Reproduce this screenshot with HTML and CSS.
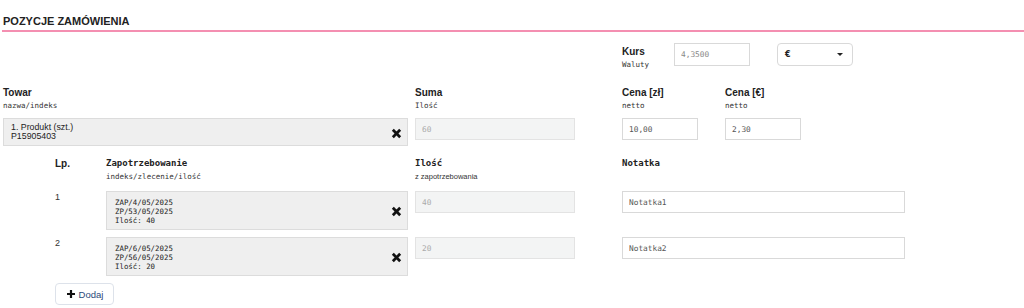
FILE: index.html
```html
<!DOCTYPE html>
<html lang="pl">

<head>
    <meta charset="UTF-8">
    <meta name="viewport" content="width=device-width, initial-scale=1.0">
    <title>Pozycje zamówienia</title>
    <link rel="stylesheet" href="styles.css">
</head>

<body>
    <section class="positions">
        <h2 class="section-title">POZYCJE ZAMÓWIENIA</h2>

        <div class="rate-row">
            <div class="label">
                <span class="label-main">Kurs</span>
                <span class="label-sub mono">Waluty</span>
            </div>
            <input class="field field-sm" type="text" value="4,3500">
            <div class="select">
                <span>€</span>
                <span class="caret"></span>
            </div>
        </div>

        <div class="product-grid">
            <div class="label">
                <span class="label-main">Towar</span>
                <span class="label-sub mono">nazwa/indeks</span>
            </div>
            <div class="label">
                <span class="label-main">Suma</span>
                <span class="label-sub mono">Ilość</span>
            </div>
            <div class="label">
                <span class="label-main">Cena [zł]</span>
                <span class="label-sub mono">netto</span>
            </div>
            <div class="label">
                <span class="label-main">Cena [€]</span>
                <span class="label-sub mono">netto</span>
            </div>

            <div class="picked picked-product">
                <div class="picked-text">
                    1. Produkt (szt.)<br>P15905403
                </div>
                <svg class="remove" viewBox="0 0 12 12">
                    <path d="M2 2L10 10M10 2L2 10" stroke="#111" stroke-width="3" />
                </svg>
            </div>
            <div class="cell"><input class="field field-md" type="text" value="60" disabled></div>
            <div class="cell"><input class="field field-sm" type="text" value="10,00"></div>
            <div class="cell"><input class="field field-sm" type="text" value="2,30"></div>
        </div>

        <div class="needs">
            <div class="needs-grid">
                <div class="label">
                    <span class="label-main">Lp.</span>
                </div>
                <div class="label">
                    <span class="label-main mono">Zapotrzebowanie</span>
                    <span class="label-sub mono">indeks/zlecenie/ilość</span>
                </div>
                <div class="label">
                    <span class="label-main mono">Ilość</span>
                    <span class="label-sub">z zapotrzebowania</span>
                </div>
                <div class="label">
                    <span class="label-main mono">Notatka</span>
                </div>

                <div class="lp">1</div>
                <div class="picked picked-need mono">
                    <div class="picked-text">ZAP/4/05/2025<br>ZP/53/05/2025<br>Ilość: 40</div>
                    <svg class="remove" viewBox="0 0 12 12">
                        <path d="M2 2L10 10M10 2L2 10" stroke="#111" stroke-width="3" />
                    </svg>
                </div>
                <div class="cell"><input class="field field-md" type="text" value="40" disabled></div>
                <div class="cell"><input class="field field-lg" type="text" value="Notatka1"></div>

                <div class="lp">2</div>
                <div class="picked picked-need mono">
                    <div class="picked-text">ZAP/6/05/2025<br>ZP/56/05/2025<br>Ilość: 20</div>
                    <svg class="remove" viewBox="0 0 12 12">
                        <path d="M2 2L10 10M10 2L2 10" stroke="#111" stroke-width="3" />
                    </svg>
                </div>
                <div class="cell"><input class="field field-md" type="text" value="20" disabled></div>
                <div class="cell"><input class="field field-lg" type="text" value="Notatka2"></div>
            </div>

            <button class="btn-add" type="button">
                <svg width="10" height="10" viewBox="0 0 10 10">
                    <path d="M5 1V9M1 5H9" stroke="#111" stroke-width="2.2" />
                </svg>
                Dodaj
            </button>
        </div>
    </section>
</body>

</html>
```

FILE: styles.css
```css
:root {
    --pink: #f48fb1;
    --border: #d9d9d9;
    --text: #222;
    --muted: #888;
    --disabled-bg: #f3f4f4;
    --picked-bg: #efefef;
}

* {
    margin: 0;
    padding: 0;
    box-sizing: border-box;
}

body {
    background: #fff;
    color: var(--text);
    font-family: "Liberation Sans Narrow", "Liberation Sans", Arial, sans-serif;
    font-size: 10px;
}

.mono {
    font-family: "DejaVu Sans Mono", "Liberation Mono", monospace;
}

.positions {
    padding: 0 0 0 3px;
}

.section-title {
    font-size: 11px;
    font-weight: 700;
    line-height: 14px;
    padding-top: 14px;
    padding-bottom: 2px;
    margin-left: -1px;
    padding-left: 1px;
    border-bottom: 2px solid var(--pink);
}

.label {
    display: flex;
    flex-direction: column;
}

.label-main {
    font-size: 10px;
    font-weight: 700;
    line-height: 13px;
    color: #222;
}

.label-main.mono {
    font-size: 9px;
    font-weight: 700;
}

.label-sub {
    font-size: 7.5px;
    line-height: 13px;
    color: #333;
}

.rate-row {
    display: flex;
    align-items: flex-start;
    margin-top: 11px;
    margin-left: 619px;
    height: 43px;
}

.rate-row .label {
    width: 52px;
    padding-top: 2px;
}

.cell {
    display: flex;
    align-items: flex-start;
}

.field {
    height: 22px;
    border: 1px solid var(--border);
    background: #fff;
    padding: 0 6px;
    font-family: "DejaVu Sans Mono", "Liberation Mono", monospace;
    font-size: 7.8px;
    color: #555;
    outline: none;
}

.field:disabled {
    background: var(--disabled-bg);
    border-color: #e3e3e3;
    color: #aaa;
}

.field-sm {
    width: 76px;
}

.rate-row .field-sm {
    height: 23px;
    color: #888;
}

.field-md {
    width: 160px;
}

.field-lg {
    width: 283px;
}

.select {
    width: 76px;
    height: 23px;
    margin-left: 27px;
    border: 1px solid var(--border);
    border-radius: 4px;
    display: flex;
    align-items: center;
    justify-content: space-between;
    padding: 0 9px 0 7px;
    font-family: "DejaVu Sans", sans-serif;
    font-size: 8px;
    font-weight: 700;
}

.caret {
    width: 0;
    height: 0;
    border-left: 3px solid transparent;
    border-right: 3px solid transparent;
    border-top: 3px solid #222;
}

.product-grid {
    display: grid;
    grid-template-columns: 412px 207px 103px 1fr;
    row-gap: 6px;
}

.picked {
    display: flex;
    align-items: center;
    justify-content: space-between;
    width: 405px;
    background: var(--picked-bg);
    border: 1px solid #dcdcdc;
    padding: 0 5px 0 7px;
}

.picked-product {
    height: 28px;
    font-size: 8.8px;
    line-height: 9px;
    color: #222;
}

.picked-need {
    width: 302px;
    height: 39px;
    font-size: 7.4px;
    line-height: 9px;
    padding-left: 8px;
    color: #222;
}

.picked-need .picked-text {
    padding-top: 1px;
}

.remove {
    width: 11px;
    height: 11px;
    margin-top: 2px;
}

.needs {
    padding-left: 52px;
    padding-top: 11px;
}

.needs-grid {
    display: grid;
    grid-template-columns: 51px 309px 207px 1fr;
    row-gap: 7px;
}

.needs-grid .label {
    margin-bottom: 1px;
}

.lp {
    font-size: 9px;
    padding-top: 1px;
    color: #333;
}

.btn-add {
    margin-top: 7px;
    width: 59px;
    height: 22px;
    display: inline-flex;
    align-items: center;
    justify-content: center;
    gap: 3px;
    background: #fff;
    border: 1px solid #dde2ea;
    border-radius: 4px;
    font-family: "Liberation Sans Narrow", "Liberation Sans", Arial, sans-serif;
    font-size: 9.5px;
    color: #2b4a7a;
}
```
